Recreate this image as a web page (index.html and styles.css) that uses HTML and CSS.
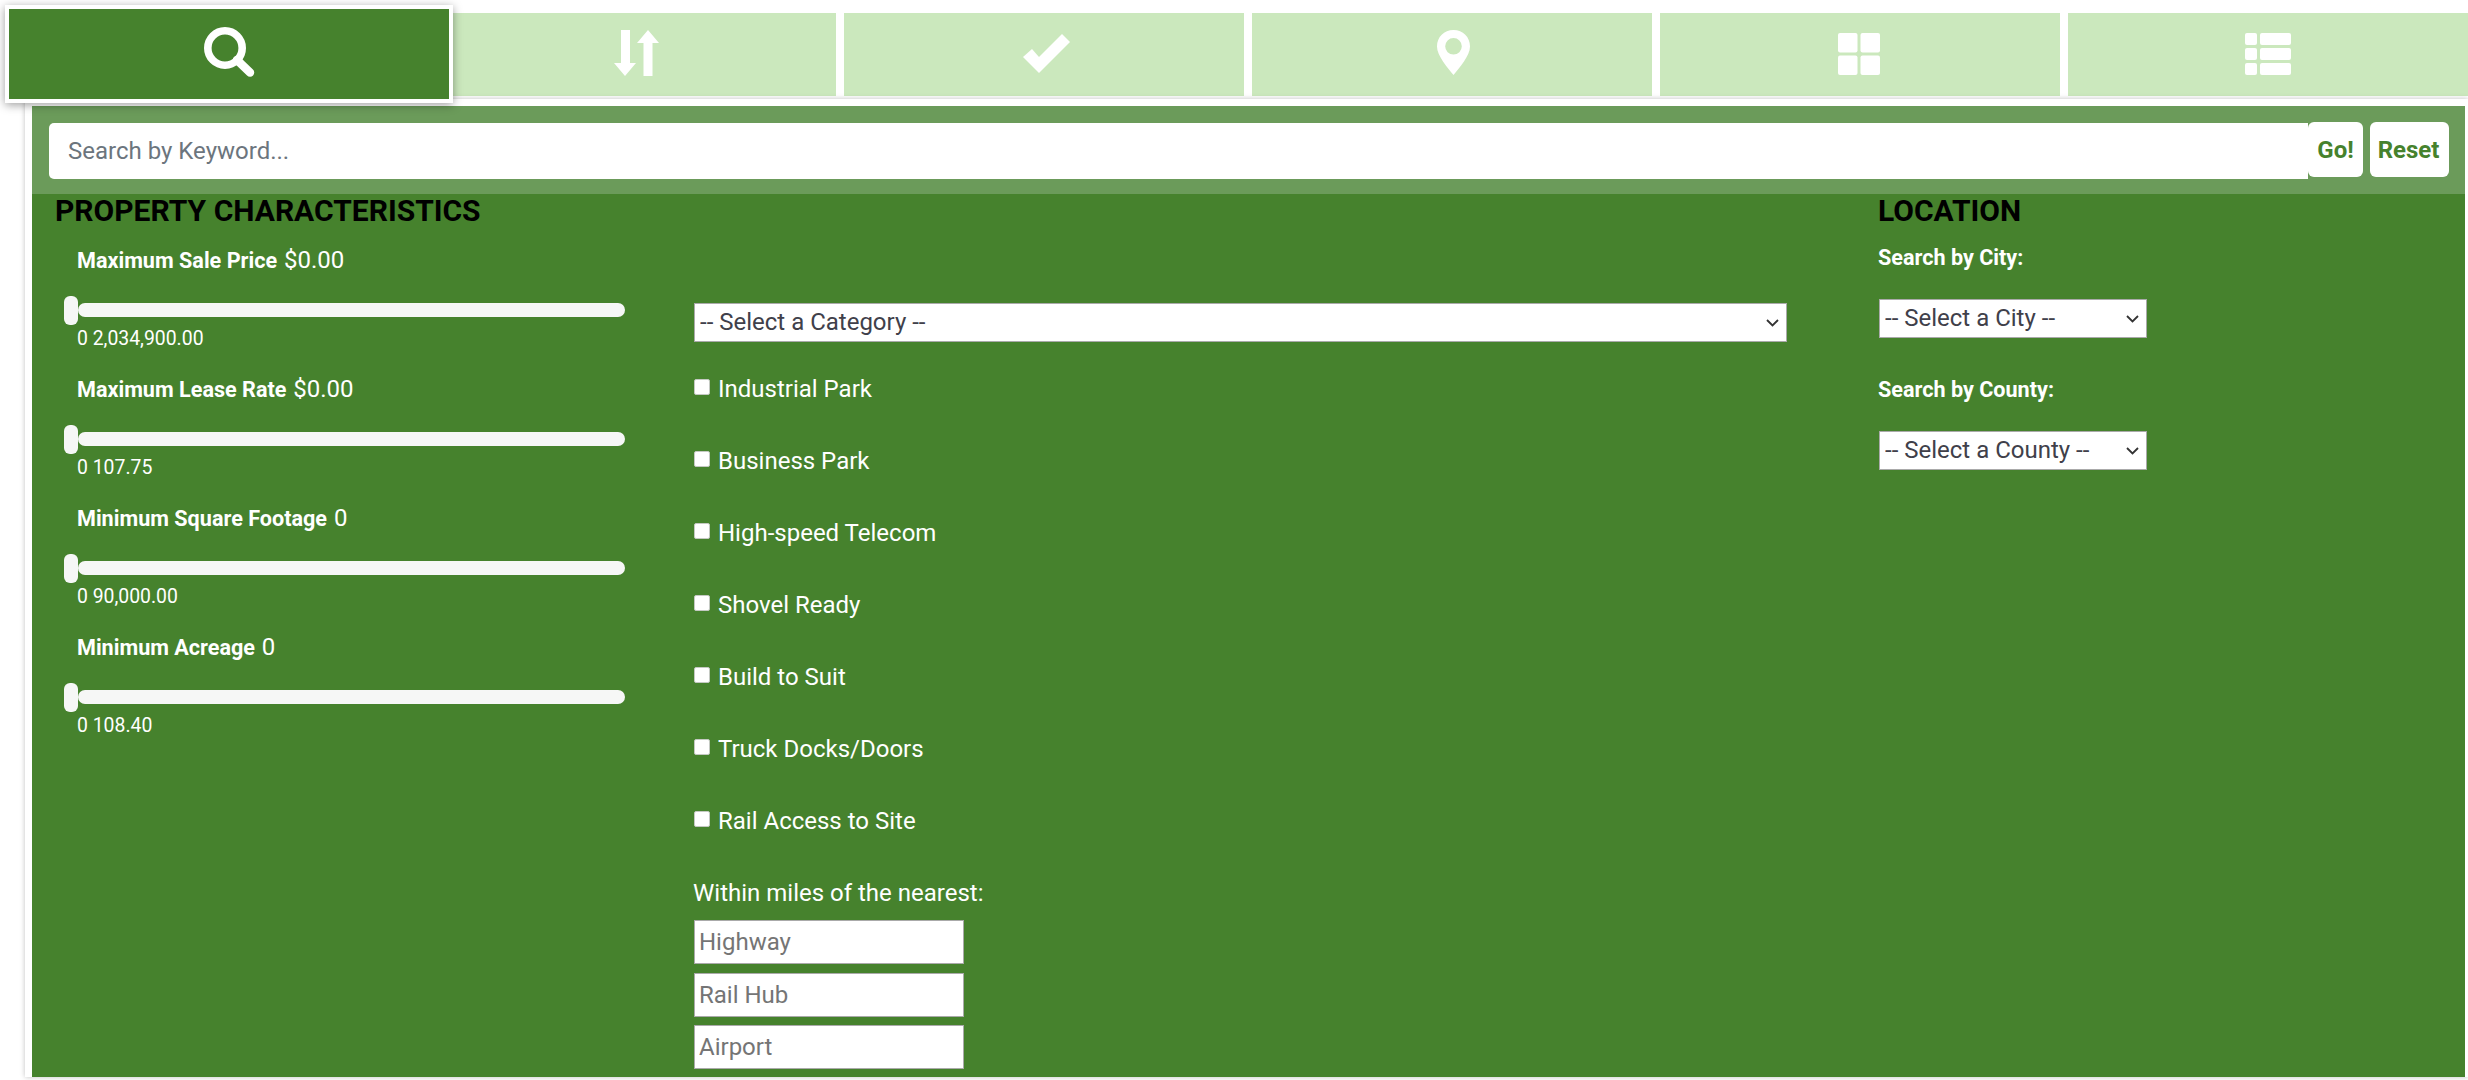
FILE: index.html
```html
<!DOCTYPE html>
<html lang="en">
<head>
<meta charset="utf-8">
<title>Property Search</title>
<link rel="stylesheet" href="styles.css">
</head>
<body>
<nav class="tabs">
  <a class="tab tab-active">
    <svg class="icon icon-search" width="51" height="50" viewBox="0 0 51 50"><circle cx="21" cy="21" r="17.2" fill="none" stroke="currentColor" stroke-width="7.6"/><path d="M33 33 L46 45.5" fill="none" stroke="currentColor" stroke-width="8.5" stroke-linecap="round"/></svg>
  </a>
  <a class="tab">
    <svg class="icon icon-sort" width="45" height="46" viewBox="0 0 45 46"><path fill="currentColor" d="M7 0h9v33h6L11 46 0 33h7zM29.5 46V13H23L34 0l11 13h-6.5v33z"/></svg>
  </a>
  <a class="tab">
    <svg class="icon icon-check" width="47" height="39" viewBox="0 0 47 39"><path fill="currentColor" d="M39 0l8 8-31 31L0 23l9-8 7 8z"/></svg>
  </a>
  <a class="tab">
    <svg class="icon icon-pin" width="33" height="45" viewBox="0 0 33 45"><path fill="currentColor" fill-rule="evenodd" d="M16.5 0C26 0 33 7 33 16.5 33 26 22 38 16.5 45 11 38 0 26 0 16.5 0 7 7 0 16.5 0zm0 8a8.3 8.3 0 1 0 0 16.6 8.3 8.3 0 0 0 0-16.6z"/></svg>
  </a>
  <a class="tab">
    <svg class="icon icon-grid" width="42" height="42" viewBox="0 0 42 42"><g fill="currentColor"><rect width="19.5" height="19.5" rx="2"/><rect x="22.5" width="19.5" height="19.5" rx="2"/><rect y="22.5" width="19.5" height="19.5" rx="2"/><rect x="22.5" y="22.5" width="19.5" height="19.5" rx="2"/></g></svg>
  </a>
  <a class="tab">
    <svg class="icon icon-list" width="46" height="42" viewBox="0 0 46 42"><g fill="currentColor"><rect width="12" height="12" rx="2"/><rect x="15" width="31" height="12" rx="2"/><rect y="15" width="12" height="12" rx="2"/><rect x="15" y="15" width="31" height="12" rx="2"/><rect y="30" width="12" height="12" rx="2"/><rect x="15" y="30" width="31" height="12" rx="2"/></g></svg>
  </a>
</nav>

<main class="panel">
  <form class="search-bar">
    <input class="search-input" type="text" placeholder="Search by Keyword...">
    <button class="btn" type="button">Go!</button>
    <button class="btn btn-reset" type="button">Reset</button>
  </form>

  <div class="columns">
    <section class="col-props">
      <h2 class="heading">PROPERTY CHARACTERISTICS</h2>
      <div class="sliders">
        <div class="slider-item">
          <div class="slider-label"><strong>Maximum Sale Price</strong> <span class="slider-value">$0.00</span></div>
          <div class="slider"><span class="thumb"></span><span class="track"></span></div>
          <div class="slider-range">0 2,034,900.00</div>
        </div>
        <div class="slider-item">
          <div class="slider-label"><strong>Maximum Lease Rate</strong> <span class="slider-value">$0.00</span></div>
          <div class="slider"><span class="thumb"></span><span class="track"></span></div>
          <div class="slider-range">0 107.75</div>
        </div>
        <div class="slider-item">
          <div class="slider-label"><strong>Minimum Square Footage</strong> <span class="slider-value">0</span></div>
          <div class="slider"><span class="thumb"></span><span class="track"></span></div>
          <div class="slider-range">0 90,000.00</div>
        </div>
        <div class="slider-item">
          <div class="slider-label"><strong>Minimum Acreage</strong> <span class="slider-value">0</span></div>
          <div class="slider"><span class="thumb"></span><span class="track"></span></div>
          <div class="slider-range">0 108.40</div>
        </div>
      </div>
    </section>

    <section class="col-features">
      <select class="select select-wide"><option>-- Select a Category --</option></select>
      <ul class="checks">
        <li><label class="check"><input type="checkbox">Industrial Park</label></li>
        <li><label class="check"><input type="checkbox">Business Park</label></li>
        <li><label class="check"><input type="checkbox">High-speed Telecom</label></li>
        <li><label class="check"><input type="checkbox">Shovel Ready</label></li>
        <li><label class="check"><input type="checkbox">Build to Suit</label></li>
        <li><label class="check"><input type="checkbox">Truck Docks/Doors</label></li>
        <li><label class="check"><input type="checkbox">Rail Access to Site</label></li>
      </ul>
      <div class="miles-title">Within miles of the nearest:</div>
      <div class="miles">
        <input class="miles-input" type="text" placeholder="Highway">
        <input class="miles-input" type="text" placeholder="Rail Hub">
        <input class="miles-input" type="text" placeholder="Airport">
      </div>
    </section>

    <section class="col-location">
      <h2 class="heading">LOCATION</h2>
      <div class="loc-group">
        <div class="loc-label">Search by City:</div>
        <select class="select select-loc"><option>-- Select a City --</option></select>
      </div>
      <div class="loc-group">
        <div class="loc-label">Search by County:</div>
        <select class="select select-loc"><option>-- Select a County --</option></select>
      </div>
    </section>
  </div>
</main>
</body>
</html>
```

FILE: styles.css
```css
* { box-sizing: border-box; }

html, body {
  margin: 0;
  height: 1080px;
  overflow: hidden;
  background: #fff;
}

body {
  font-family: Roboto, "Liberation Sans", sans-serif;
  color: #fff;
}

/* Tabs */
.tabs {
  display: flex;
  gap: 8px;
  height: 103px;
  padding-top: 5px;
  align-items: flex-start;
}

.tab {
  flex: 1 1 0;
  height: 83px;
  margin-top: 8px;
  display: flex;
  align-items: center;
  justify-content: center;
  background: #cbe8bd;
  color: #fff;
}

.tab-active {
  flex: 0 0 448px;
  height: 98px;
  margin: 0 -25px 0 5px;
  border: 4px solid #fff;
  background: #46822d;
  box-shadow: 0 2px 9px rgba(0, 0, 0, .38);
  position: relative;
  z-index: 2;
}

.icon { display: block; }
.icon-search { margin-bottom: 4px; }
.icon-sort { margin-bottom: 4px; }
.icon-check { margin: 0 0 2px 4px; }
.icon-pin { margin: 0 0 4px 2px; }
.icon-grid { margin: 0 2px 1px 0; }
.icon-list { margin-bottom: 1px; }

/* Panel */
.panel {
  position: relative;
  z-index: 1;
  margin: -4px 0 0 25px;
  border-style: solid;
  border-color: #fff;
  border-width: 7px 3px 0 7px;
  background: #46822d;
  box-shadow: 0 0 5px rgba(0, 0, 0, .25);
  padding-bottom: 8px;
}

.search-bar {
  display: flex;
  align-items: flex-start;
  height: 88px;
  padding: 16px 16px 0 17px;
  background: #6b9b5a;
}

.search-input {
  flex: 1;
  height: 56px;
  margin-top: 1px;
  padding: 0 19px;
  border: 0;
  border-radius: 5px 0 0 5px;
  background: #fff;
  font: 400 24px Roboto, sans-serif;
  outline: 0;
}

.search-input::placeholder { color: #6c757d; opacity: 1; }

.btn {
  width: 55px;
  height: 55px;
  padding: 0;
  border: 0;
  border-radius: 6px;
  background: #fff;
  color: #46822d;
  font: 700 24px Roboto, sans-serif;
}

.btn-reset {
  width: 79px;
  margin-left: 7px;
  padding-right: 2px;
}

/* Columns */
.columns {
  display: grid;
  grid-template-columns: 662px 1185px 1fr;
}

.heading {
  margin: 0;
  color: #000;
  font-size: 30px;
  font-weight: 700;
  line-height: 34px;
}

.col-props { padding-left: 23px; }

.sliders { margin-top: 15px; }

.slider-item {
  height: 129px;
  padding-left: 8.5px;
}

.slider-label {
  height: 34px;
  padding-left: 13.5px;
  font-size: 21.6px;
  line-height: 34px;
}

.slider-label strong { font-weight: 700; }

.slider-value {
  margin-left: 1.5px;
  font-size: 24px;
}

.slider {
  display: flex;
  align-items: center;
  width: 561.5px;
  height: 29px;
  margin-top: 18.5px;
}

.thumb {
  flex: 0 0 14.5px;
  height: 29px;
  border-radius: 6px;
  background: #f6f7f6;
}

.track {
  flex: 1;
  height: 14px;
  border-radius: 7px;
  background: #f6f7f6;
}

.slider-range {
  padding-left: 13.5px;
  font-size: 19.4px;
  line-height: 27px;
}

/* Selects */
.select {
  display: block;
  height: 39px;
  padding: 0 32px 2px 5px;
  border: 1px solid #aaa;
  border-radius: 0;
  appearance: none;
  background: #fff url("data:image/svg+xml,%3Csvg xmlns='http://www.w3.org/2000/svg' width='13' height='8' viewBox='0 0 13 8'%3E%3Cpath d='M1 1l5.5 5.5L12 1' fill='none' stroke='%23333' stroke-width='1.8'/%3E%3C/svg%3E") no-repeat right 7px center;
  color: #40404a;
  font: 400 24px Roboto, sans-serif;
}

.select-wide { width: 1093px; }
.select-loc { width: 268px; }

/* Middle column */
.col-features { padding-top: 109px; }

.checks {
  list-style: none;
  margin: 29px 0 36px;
  padding: 0;
}

.checks li { height: 36px; }
.checks li + li { margin-top: 36px; }

.check {
  display: flex;
  align-items: center;
  height: 36px;
  font-size: 24px;
}

.check input {
  appearance: none;
  width: 16px;
  height: 16px;
  margin: -4px 8px 0 0;
  border: 1px solid #c4c9c2;
  border-radius: 2px;
  background: #fff;
}

.miles-title {
  margin-left: -1px;
  font-size: 24px;
  line-height: 36px;
}

.miles {
  display: flex;
  flex-direction: column;
  gap: 8.5px;
  margin-top: 9px;
}

.miles-input {
  width: 270px;
  height: 44px;
  padding: 0 4px;
  border: 1px solid #aaa;
  background: #fff;
  font: 400 24px Roboto, sans-serif;
  outline: 0;
}

.miles-input::placeholder { color: #757575; opacity: 1; }

/* Location column */
.col-location .heading { margin-left: -1px; }

.loc-group { margin-top: 13px; }
.loc-group + .loc-group { margin-top: 35px; }

.loc-label {
  margin: 0 0 24px -1px;
  font-size: 21.6px;
  font-weight: 700;
  line-height: 34px;
}
```
